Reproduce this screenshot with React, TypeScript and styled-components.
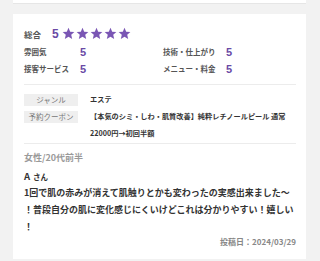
import { createGlobalStyle, styled } from "styled-components";

const GlobalStyle = createGlobalStyle`
  body {
    margin: 0;
    background: #f2f2f2;
    font-family: "Noto Sans CJK JP", "Noto Sans", sans-serif;
    color: #333;
  }
`;

const Page = styled.div`
  padding: 0 14px 0 13px;
`;

const PrevCard = styled.div`
  height: 3px;
  background: #fff;
  border-bottom: 1px solid #e6e6e6;
`;

const Card = styled.div`
  margin-top: 10px;
  height: 245px;
  box-sizing: border-box;
  background: #fff;
  padding: 10px 10px 0 11px;
  display: flex;
  flex-direction: column;
`;

const Summary = styled.div`
  height: 19px;
  display: flex;
  align-items: center;
`;

const SummaryLabel = styled.span`
  font-size: 8.5px;
  font-weight: 700;
  color: #555;
  width: 28px;
`;

const Score = styled.span<{ $big?: boolean }>`
  font-family: "Liberation Sans", Arial, sans-serif;
  font-weight: 700;
  font-size: ${(p) => (p.$big ? "12px" : "11px")};
  color: #6a4aa5;
`;

const Stars = styled.div`
  display: flex;
  gap: 1px;
  margin-left: 3px;
`;

const RatingGrid = styled.div`
  display: grid;
  grid-template-columns: 56px 83px 63px auto;
  grid-auto-rows: 17px;
  align-items: center;
`;

const RatingLabel = styled.span`
  font-size: 7.5px;
  font-weight: 700;
  color: #555;
`;

const Divider = styled.hr<{ $top: number }>`
  border: 0;
  border-top: 1px solid #ececec;
  margin: ${(p) => p.$top}px 0 0;
`;

const InfoTable = styled.div`
  margin-top: 6px;
`;

const InfoRow = styled.div`
  display: flex;
  gap: 12px;
`;

const InfoLabel = styled.div`
  flex: 0 0 54px;
  height: 12px;
  margin-top: 3px;
  background: #efefef;
  text-align: center;
  font-size: 7.5px;
  line-height: 12px;
  color: #777;
`;

const InfoValue = styled.div`
  flex: 1;
  font-size: 7.2px;
  line-height: 17px;
  font-weight: 700;
  color: #333;
`;

const Profile = styled.div`
  margin-top: 5px;
  font-size: 9px;
  line-height: 17px;
  font-weight: 700;
  color: #9a9a9a;
`;

const Name = styled.div`
  margin-top: 3px;
  height: 15px;
  line-height: 15px;
  font-weight: 700;
  font-size: 9.5px;
  span {
    font-size: 7.5px;
    margin-left: 3px;
  }
`;

const Comment = styled.p`
  margin: 0;
  font-size: 9px;
  line-height: 17px;
  font-weight: 700;
  color: #333;
  line-break: anywhere;
`;

const PostDate = styled.div`
  text-align: right;
  font-size: 8px;
  line-height: 14px;
  font-weight: 700;
  color: #888;
`;

function Star() {
  return (
    <svg width="13" height="13" viewBox="0 0 24 24">
      <path
        fill="#7a56b4"
        d="M12 1.5l3.1 7.1 7.7.7-5.8 5.1 1.8 7.6L12 18l-6.8 4 1.8-7.6L1.2 9.3l7.7-.7z"
      />
    </svg>
  );
}

const ratings = [
  ["雰囲気", "5", "技術・仕上がり", "5"],
  ["接客サービス", "5", "メニュー・料金", "5"],
];

function App() {
  return (
    <>
      <GlobalStyle />
      <Page>
        <PrevCard />
        <Card>
          <Summary>
            <SummaryLabel>総合</SummaryLabel>
            <Score $big>5</Score>
            <Stars>
              {[0, 1, 2, 3, 4].map((i) => (
                <Star key={i} />
              ))}
            </Stars>
          </Summary>
          <RatingGrid>
            {ratings.map((row) =>
              row.map((cell, i) =>
                i % 2 === 0 ? (
                  <RatingLabel key={cell}>{cell}</RatingLabel>
                ) : (
                  <Score key={row[i - 1] + i}>{cell}</Score>
                )
              )
            )}
          </RatingGrid>
          <Divider $top={7} />
          <InfoTable>
            <InfoRow>
              <InfoLabel>ジャンル</InfoLabel>
              <InfoValue>エステ</InfoValue>
            </InfoRow>
            <InfoRow>
              <InfoLabel>予約クーポン</InfoLabel>
              <InfoValue>
                【本気のシミ・しわ・肌質改善】純粋レチノールピール 通常
                <br />
                22000円→初回半額
              </InfoValue>
            </InfoRow>
          </InfoTable>
          <Divider $top={1} />
          <Profile>女性/20代前半</Profile>
          <Name>
            A<span>さん</span>
          </Name>
          <Comment>
            1回で肌の赤みが消えて肌触りとかも変わったの実感出来ました〜！普段自分の肌に変化感じにくいけどこれは分かりやすい！嬉しい！
          </Comment>
          <PostDate>投稿日：2024/03/29</PostDate>
        </Card>
      </Page>
    </>
  );
}

export default App;
